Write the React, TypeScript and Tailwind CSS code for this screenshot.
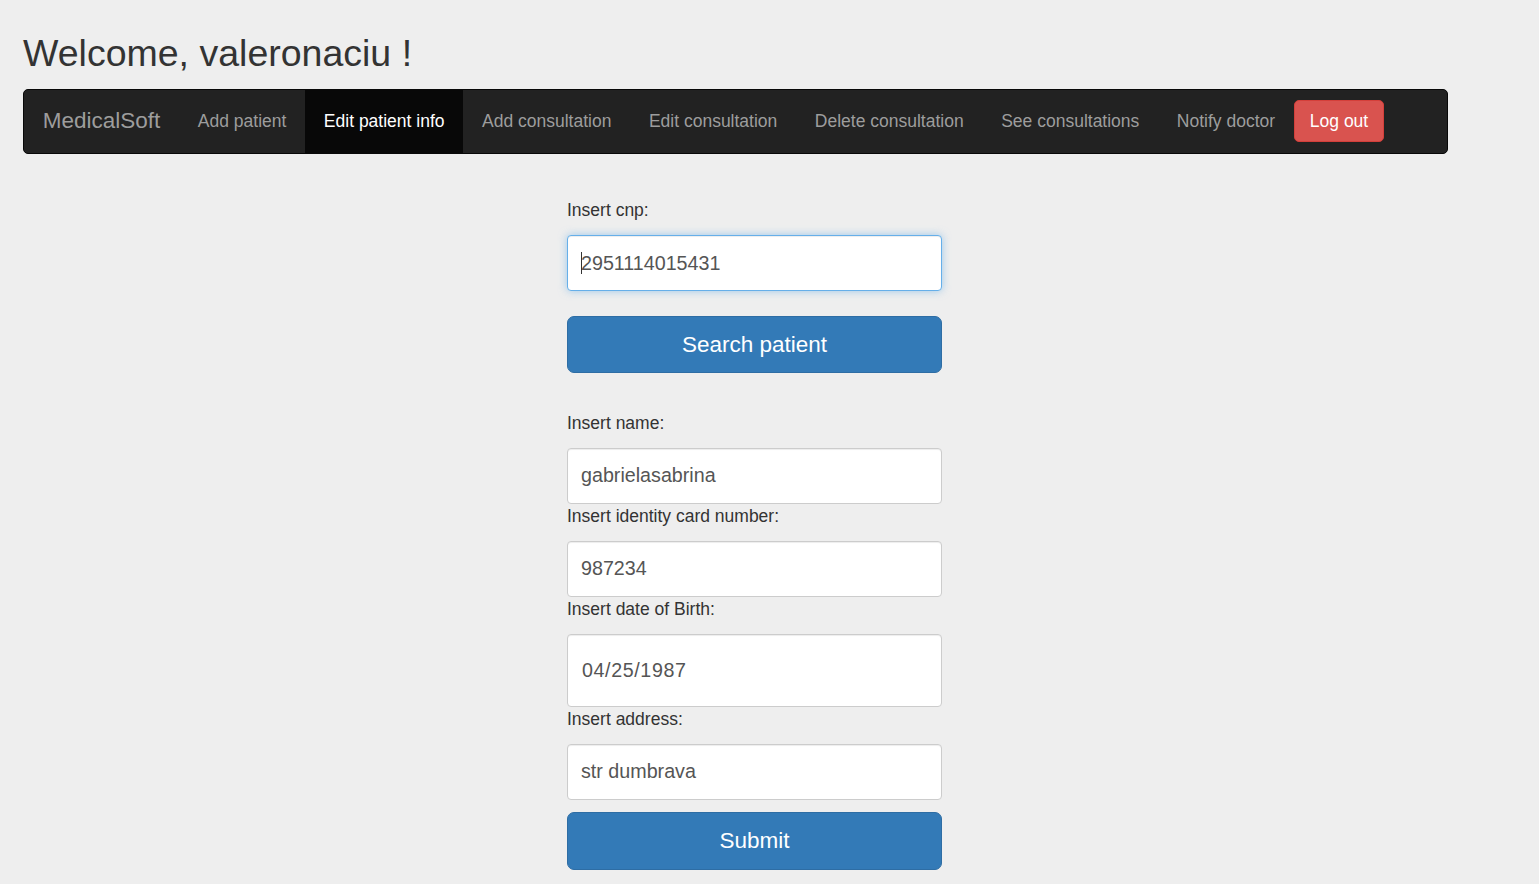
const navLinks = [
  'Add patient',
  'Edit patient info',
  'Add consultation',
  'Edit consultation',
  'Delete consultation',
  'See consultations',
  'Notify doctor',
];

function Field({
  label,
  value,
  tall,
  focused,
}: {
  label: string;
  value: string;
  tall?: boolean;
  focused?: boolean;
}) {
  return (
    <div className="flex flex-col">
      <label className="text-[17.5px] leading-[25px] text-[#333] mb-[12px]">{label}</label>
      <div className="relative">
        <input
          readOnly
          defaultValue={value}
          className={
            'w-full bg-white rounded-[4px] border px-[13px] text-[19.7px] text-[#555] outline-none ' +
            (tall ? 'h-[73px] pl-[14px] tracking-[0.6px] ' : 'h-[56px] ') +
            (focused
              ? 'border-[#66afe9] shadow-[inset_0_1px_1px_rgba(0,0,0,0.075),0_0_8px_rgba(102,175,233,0.6)]'
              : 'border-[#ccc] shadow-[inset_0_1px_1px_rgba(0,0,0,0.075)]')
          }
        />
        {focused && (
          <span className="absolute left-[13.5px] top-[17px] h-[22px] w-px bg-[#333]" />
        )}
      </div>
    </div>
  );
}

export default function App() {
  return (
    <main
      className="min-h-screen bg-[#eeeeee] px-[23px] pt-[33px] pb-8"
      style={{ fontFamily: '"Liberation Sans", Arial, sans-serif' }}
    >
      <h2 className="text-[37.5px] leading-[41.25px] text-[#333] mb-[14.5px]">Welcome, valeronaciu !</h2>

      {/* Navbar */}
      <nav className="w-[1425px] h-[65px] flex items-stretch bg-[#222] border border-[#080808] rounded-[5px] pr-4">
        <span className="flex items-center px-[18.75px] text-[22.5px] text-[#9d9d9d]">MedicalSoft</span>
        {navLinks.map((l) => (
          <a
            key={l}
            className={
              'flex items-center px-[18.75px] text-[17.5px] ' +
              (l === 'Edit patient info' ? 'bg-[#080808] text-white' : 'text-[#9d9d9d]')
            }
          >
            {l}
          </a>
        ))}
        <div className="flex items-center">
          <button className="h-[42px] px-[15px] bg-[#d9534f] border border-[#d43f3a] rounded-[5px] text-white text-[17.5px]">
            Log out
          </button>
        </div>
      </nav>

      {/* Form */}
      <form className="w-[375px] ml-[544px] mt-[44.5px] flex flex-col">
        <Field label="Insert cnp:" value="2951114015431" focused />
        <button
          type="button"
          className="mt-[25px] h-[57px] bg-[#337ab7] border border-[#2e6da4] rounded-[7px] text-white text-[22.5px]"
        >
          Search patient
        </button>

        <div className="mt-[37.5px] flex flex-col">
          <Field label="Insert name:" value="gabrielasabrina" />
          <Field label="Insert identity card number:" value="987234" />
          <Field label="Insert date of Birth:" value="04/25/1987" tall />
          <Field label="Insert address:" value="str dumbrava" />
        </div>

        <button
          type="button"
          className="mt-[12px] h-[58px] bg-[#337ab7] border border-[#2e6da4] rounded-[7px] text-white text-[22.5px]"
        >
          Submit
        </button>
      </form>
    </main>
  );
}
